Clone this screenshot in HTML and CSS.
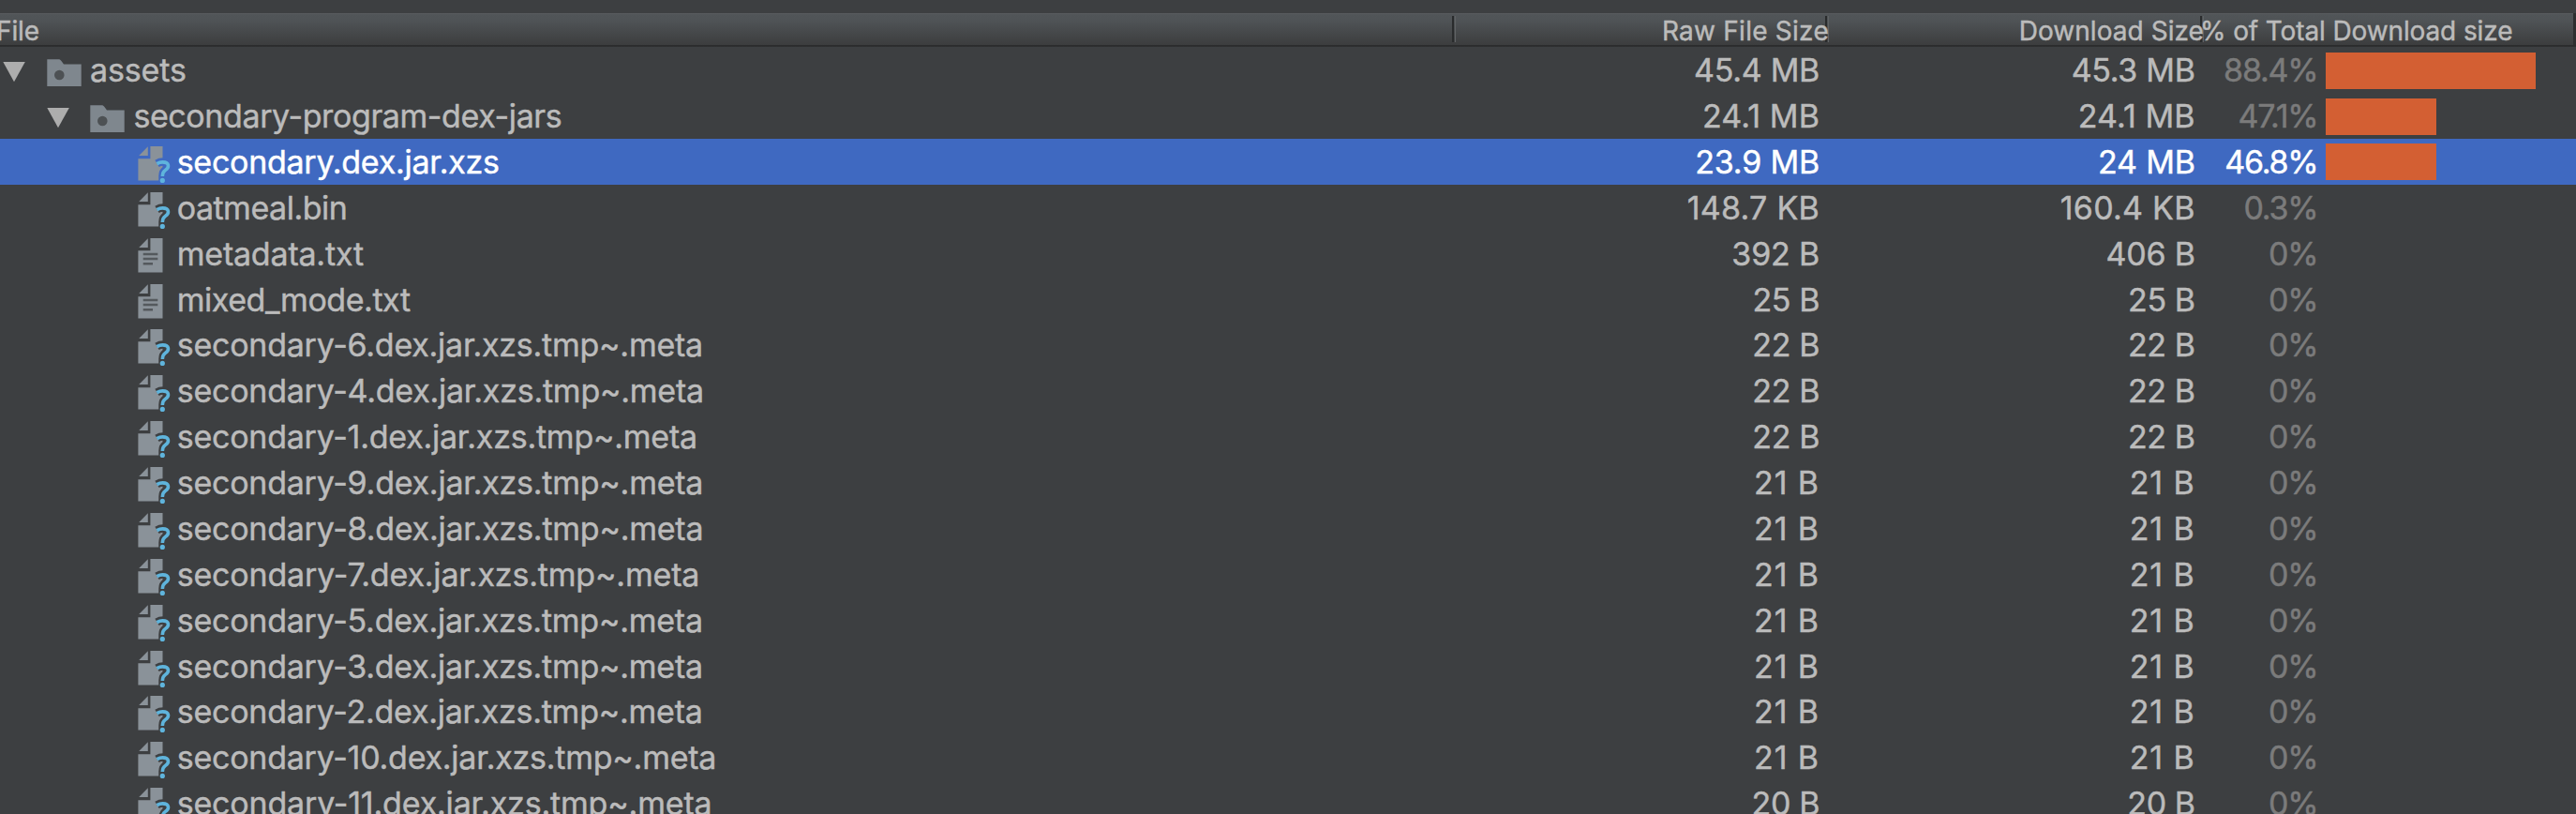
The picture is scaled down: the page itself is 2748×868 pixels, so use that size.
FILE: index.html
```html
<!DOCTYPE html>
<html lang="en">
<head>
<meta charset="utf-8">
<title>APK Analyzer</title>
<link rel="stylesheet" href="styles.css">
</head>
<body>
<svg class="defs" aria-hidden="true">
  <symbol id="arrow" viewBox="0 0 24 49"><path fill="#adadad" d="M.3 15.9H23.8L12 37.2z"/></symbol>
  <symbol id="folder" viewBox="0 0 37 49">
    <path fill="#7f878e" d="M.3 13.3H13Q14.5 13.3 18 18.6H36.7V41.9H.3z"/>
    <circle cx="13.3" cy="30" r="5.3" fill="#4d5154"/>
  </symbol>
  <mask id="cut" maskUnits="userSpaceOnUse" x="0" y="0" width="36" height="49">
    <rect width="36" height="49" fill="#fff"/>
    <path fill="none" stroke="#000" stroke-width="8.500" d="M20.500 26.300Q23.500 24.500 27 24.500C34 24.500 34 31 29.500 33.500Q26.500 35.200 26.500 39.500V47"/>
  </mask>
  <symbol id="unknown" viewBox="0 0 36 49">
    <path class="sheet" mask="url(#cut)" d="M1.200 18 10.800 8.300V18zM13.400 8H26.500V44.400H.4V21.200H13.400z"/>
    <path fill="none" stroke="#5fb4dc" stroke-width="3.600" d="M20.400 26.600Q23.500 24.900 26.500 24.900C34 24.900 33.800 30.700 29.300 33.500Q26.300 35.400 26.300 40"/>
    <circle cx="26.300" cy="44.400" r="2.600" fill="#5fb4dc"/>
  </symbol>
  <symbol id="text" viewBox="0 0 36 49">
    <path class="sheet" d="M1.200 18 10.800 8.300V18zM13.400 8H26.500V44.400H.4V21.200H13.400z"/>
    <path stroke="#54595d" stroke-width="2.500" d="M5.700 24.900H21.300M5.700 30.100H21.300M5.700 35.300H16"/>
  </symbol>
</svg>
<main class="table">
  <header class="head">
    <span class="col file">File</span>
    <span class="col raw">Raw File Size</span>
    <span class="col dl">Download Size</span>
    <span class="col total">% of Total Download size</span>
  </header>
  <div id="rows"></div>
</main>
<script src="rows.js"></script>
</body>
</html>
```
FILE: styles.css
```css
* { box-sizing: border-box; }
body {
  margin: 0;
  height: 868px;
  overflow: hidden;
  background: #3d3f41;
  color: #bbbbbb;
  font-family: Inter, "Liberation Sans", sans-serif;
  -webkit-text-stroke: .45px currentColor;
}
.defs { position: absolute; width: 0; height: 0; }
.table { padding-top: 14px; }
.head, .row {
  display: grid;
  grid-template-columns: 1553px 396px 402px 397px;
  white-space: nowrap;
}
.head {
  position: relative;
  z-index: 0;
  height: 36.2px;
  line-height: 38px;
  font-size: 28px;
  background: linear-gradient(#5a5d60 0, #515558 1.5px, #4f5356 8px, #3c3d3e 34px, #2b2c2d 34.5px, #303132 36px);
}
.col { position: relative; }
.col::after {
  content: "";
  position: absolute;
  z-index: -1;
  right: 0;
  top: 3px;
  width: 4px;
  height: 28px;
  background: linear-gradient(90deg, #292b2c 0 2px, transparent 2px 3px, #606365 3px);
}
.file { margin-left: -4px; letter-spacing: -.1px; }
.raw, .dl { text-align: right; }
.raw { letter-spacing: .25px; right: -2px; }
.raw::after { right: 0; }
.dl { letter-spacing: .05px; }
.total { letter-spacing: -.12px; margin-left: -4px; }
.total::after { top: 0; height: 34px; width: 3px; background: #2e2f30; }
.row {
  height: 48.89px;
  line-height: 49.89px;
  font-size: 34px;
}
.name { display: flex; padding-left: 147px; }
.name .icon { flex: none; width: 36px; height: 49px; margin-right: 5.7px; }
.folder-row .name { padding-left: 3.3px; }
.folder-row.deep .name { padding-left: 49.7px; }
.folder-row .arrow { flex: none; width: 24px; height: 49px; margin-right: 22.4px; }
.folder-row .icon { width: 37px; margin-right: 9.3px; }
.sheet { fill: #8a9299; }
.size { text-align: right; padding-right: 8px; }
.size.download { padding-right: 9.3px; }
.share { display: flex; align-items: flex-start; }
.percent { flex: none; width: 121.5px; text-align: right; color: #7b7b7b; letter-spacing: -1.2px; }
.bar { height: 39px; margin: 5.5px 0 0 8.8px; background: #d35f33; }
.selected { background: #3f69c1; color: #fff; }
.selected .percent { color: #fff; }
.selected .sheet { fill: #8b9bb5; }
```
FILE: rows.js
```js
// kind, name, raw size, download size, percent, bar width, name tracking, size tracking
const rows = [
  ['folder', 'assets', '45.4 MB', '45.3 MB', '88.4%', 224, -.12, -.3],
  ['deep', 'secondary-program-dex-jars', '24.1 MB', '24.1 MB', '47.1%', 118, -.4, .1],
  ['selected', 'secondary.dex.jar.xzs', '23.9 MB', '24 MB', '46.8%', 118, -.27, -.2],
  ['unknown', 'oatmeal.bin', '148.7 KB', '160.4 KB', '0.3%', 0, -.5, .25],
  ['text', 'metadata.txt', '392 B', '406 B', '0%', 0, -.2, -.2],
  ['text', 'mixed_mode.txt', '25 B', '25 B', '0%', 0, -.45, -.4],
  ...[6, 4, 1].map(n => ['unknown', `secondary-${n}.dex.jar.xzs.tmp~.meta`, '22 B', '22 B', '0%', 0, -.24, -.4]),
  ...[9, 8, 7, 5, 3, 2, 10].map(n => ['unknown', `secondary-${n}.dex.jar.xzs.tmp~.meta`, '21 B', '21 B', '0%', 0, n === 7 ? -.18 : -.24, .9]),
  ['unknown', 'secondary-11.dex.jar.xzs.tmp~.meta', '20 B', '20 B', '0%', 0, -.18, -.4]
];

const icon = (id, cls) => `<svg class="${cls}"><use href="#${id}"/></svg>`;

document.getElementById('rows').innerHTML = rows.map(([kind, name, raw, dl, pct, bar, track, sizeTrack]) => {
  const isFolder = kind === 'folder' || kind === 'deep';
  const cls = isFolder ? `folder-row ${kind}` : kind;
  const glyphs = isFolder
    ? icon('arrow', 'arrow') + icon('folder', 'icon')
    : icon(kind === 'text' ? 'text' : 'unknown', 'icon');
  return `<div class="row ${cls}">
    <div class="name">${glyphs}<span style="letter-spacing:${track}px">${name}</span></div>
    <div class="size" style="letter-spacing:${sizeTrack}px">${raw}</div>
    <div class="size download" style="letter-spacing:${sizeTrack}px">${dl}</div>
    <div class="share"><span class="percent">${pct}</span>${bar ? `<div class="bar" style="width:${bar}px"></div>` : ''}</div>
  </div>`;
}).join('');
```
